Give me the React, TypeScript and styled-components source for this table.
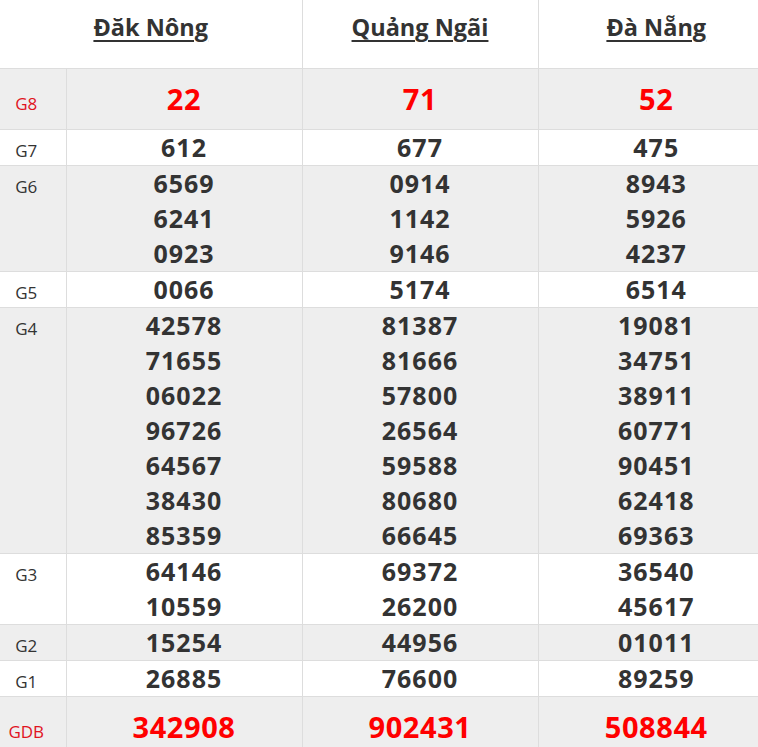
import React from "react";
import styled, { createGlobalStyle } from "styled-components";

const Global = createGlobalStyle`
  html, body { margin: 0; padding: 0; background: #fff; overflow: hidden; }
  body { font-family: "Open Sans", "Noto Sans", sans-serif; color: #333; }
`;

const Table = styled.table`
  width: 774px;
  table-layout: fixed;
  border-collapse: collapse;
  font-family: "Open Sans", "Noto Sans", sans-serif;
`;

const Col = styled.col<{ $w: number }>`
  width: ${(p) => p.$w}px;
`;

const HeadRow = styled.tr`
  border-bottom: 1px solid #ddd;
`;

const HeadCell = styled.th`
  padding: 12px 0 26px;
  border-right: 1px solid #ddd;
  text-align: center;
  vertical-align: top;
  font-size: 23.5px;
  line-height: 30px;
  font-weight: 700;
  color: #333;
  &:last-child { border-right: none; }
`;

const HeadLink = styled.a`
  color: #333;
  text-decoration: underline;
  text-underline-offset: 4px;
  text-decoration-thickness: 2px;
`;

const Row = styled.tr<{ $alt: boolean }>`
  background: ${(p) => (p.$alt ? "#eee" : "#fff")};
  border-bottom: 1px solid #ddd;
`;

const Label = styled.td<{ $red: boolean }>`
  padding: 0 13px 0 0;
  border-right: 1px solid #ddd;
  vertical-align: baseline;
  text-align: center;
  font-size: 17px;
  line-height: 24px;
  color: ${(p) => (p.$red ? "#e0141e" : "#333")};
`;

const Cell = styled.td<{ $big: boolean }>`
  padding: ${(p) => (p.$big ? "12px 0 13px" : "0")};
  border-right: 1px solid #ddd;
  vertical-align: baseline;
  text-align: center;
  &:last-child { border-right: none; }
`;

const Num = styled.div<{ $big: boolean }>`
  font-size: ${(p) => (p.$big ? "29px" : "25px")};
  letter-spacing: ${(p) => (p.$big ? "0.6px" : "1px")};
  line-height: 35px;
  font-weight: 700;
  color: ${(p) => (p.$big ? "#ff0000" : "#333")};
`;

type Prize = { label: string; big?: boolean; values: string[][] };

const provinces = ["Đăk Nông", "Quảng Ngãi", "Đà Nẵng"];

const prizes: Prize[] = [
  { label: "G8", big: true, values: [["22"], ["71"], ["52"]] },
  { label: "G7", values: [["612"], ["677"], ["475"]] },
  {
    label: "G6",
    values: [
      ["6569", "6241", "0923"],
      ["0914", "1142", "9146"],
      ["8943", "5926", "4237"],
    ],
  },
  { label: "G5", values: [["0066"], ["5174"], ["6514"]] },
  {
    label: "G4",
    values: [
      ["42578", "71655", "06022", "96726", "64567", "38430", "85359"],
      ["81387", "81666", "57800", "26564", "59588", "80680", "66645"],
      ["19081", "34751", "38911", "60771", "90451", "62418", "69363"],
    ],
  },
  {
    label: "G3",
    values: [
      ["64146", "10559"],
      ["69372", "26200"],
      ["36540", "45617"],
    ],
  },
  { label: "G2", values: [["15254"], ["44956"], ["01011"]] },
  { label: "G1", values: [["26885"], ["76600"], ["89259"]] },
  { label: "GDB", big: true, values: [["342908"], ["902431"], ["508844"]] },
];

export default function App() {
  return (
    <>
      <Global />
      <Table>
        <colgroup>
          <Col $w={66} />
          <Col $w={236} />
          <Col $w={236} />
          <Col $w={236} />
        </colgroup>
        <thead>
          <HeadRow>
            {provinces.map((p, i) => (
              <HeadCell key={p} colSpan={i === 0 ? 2 : 1}>
                <HeadLink>{p}</HeadLink>
              </HeadCell>
            ))}
          </HeadRow>
        </thead>
        <tbody>
          {prizes.map((pr, i) => (
            <Row key={pr.label} $alt={i % 2 === 0}>
              <Label $red={!!pr.big}>{pr.label}</Label>
              {pr.values.map((vals, j) => (
                <Cell key={j} $big={!!pr.big}>
                  {vals.map((v, k) => (
                    <Num key={k} $big={!!pr.big}>
                      {v}
                    </Num>
                  ))}
                </Cell>
              ))}
            </Row>
          ))}
        </tbody>
      </Table>
    </>
  );
}
